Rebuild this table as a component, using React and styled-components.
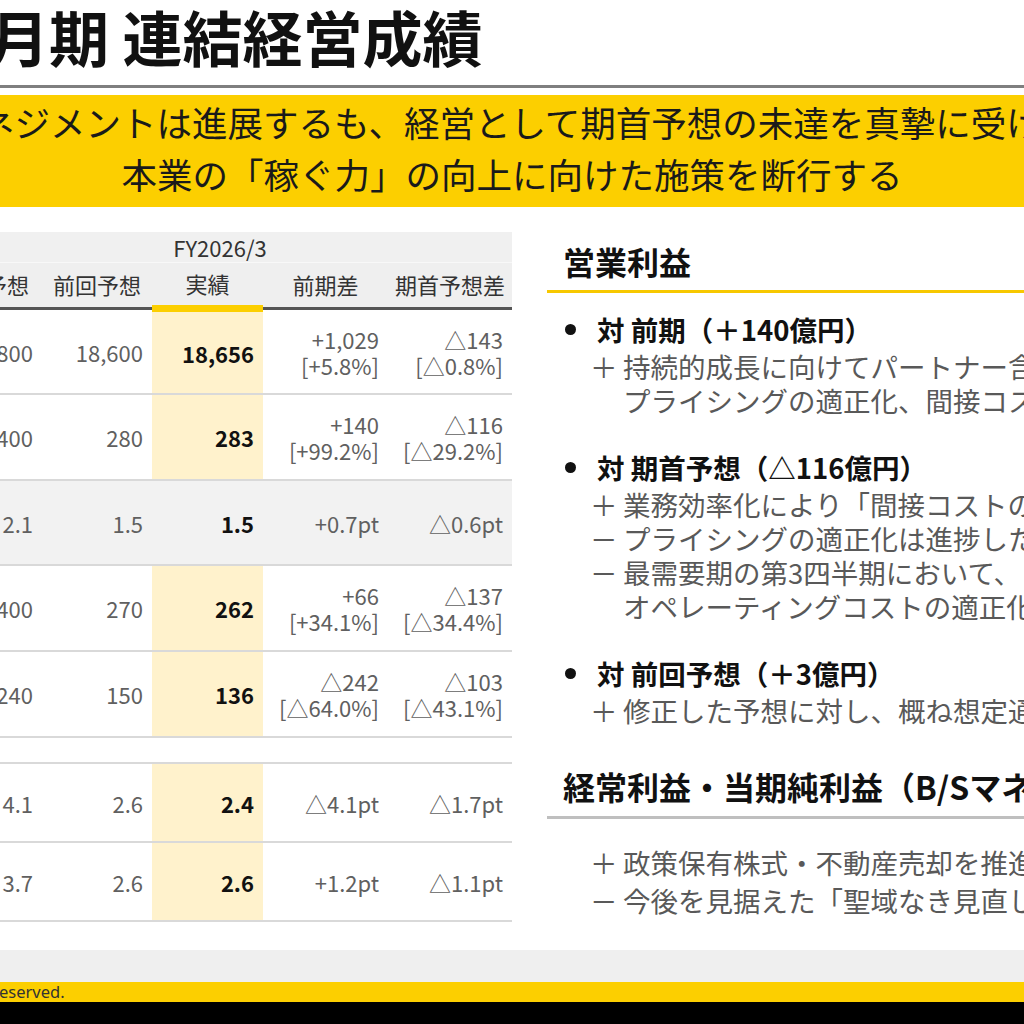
import React from "react";
import styled, { createGlobalStyle } from "styled-components";

const GlobalStyle = createGlobalStyle`
  html, body {
    margin: 0;
    padding: 0;
    background: #fff;
  }
  body {
    font-family: "Noto Sans CJK JP", "Noto Sans", sans-serif;
  }
`;

const Page = styled.div`
  width: 1024px;
  height: 1024px;
  overflow: hidden;
  display: flex;
  flex-direction: column;
  background: #fff;
  color: #222;
`;

const TitleBar = styled.header`
  height: 85px;
  flex-shrink: 0;
  display: flex;
  align-items: flex-start;
  padding-top: 6px;
  box-sizing: border-box;
`;

const Title = styled.h1`
  margin: 0 0 0 -11px;
  font-size: 60px;
  font-weight: 700;
  line-height: 60px;
  white-space: nowrap;
  color: #111;
`;

const TitleRule = styled.div`
  height: 3px;
  flex-shrink: 0;
  background: #7f7f7f;
  margin-bottom: 7px;
`;

const Banner = styled.section`
  height: 112px;
  flex-shrink: 0;
  box-sizing: border-box;
  padding-top: 1px;
  background: #fccf00;
  display: flex;
  flex-direction: column;
  align-items: center;
  font-size: 35.5px;
  line-height: 52px;
  color: #1a1a1a;
  white-space: nowrap;
`;

const BannerLine = styled.div`
  align-self: ${(p) => (p.$bleed ? "flex-start" : "center")};
  margin-left: ${(p) => (p.$bleed ? "-21px" : "0")};
`;

const Content = styled.main`
  flex: 1;
  display: flex;
  min-height: 0;
`;

const TableArea = styled.div`
  width: 512px;
  flex-shrink: 0;
  padding-top: 25px;
`;

const Table = styled.table`
  margin-left: -72px;
  width: 584px;
  table-layout: fixed;
  border-collapse: collapse;
  font-size: 22px;
  color: #595959;
`;

const PeriodCell = styled.th`
  height: 30px;
  padding: 0;
  background: #f0f0f0;
  font-weight: 400;
  line-height: 30px;
  text-align: center;
  color: #333;
  border-bottom: 1px solid #f8f8f8;
`;

const HeadCell = styled.th`
  height: 40px;
  padding: 0 0 2px;
  background: #efefef;
  font-weight: 400;
  text-align: center;
  color: #333;
  border-bottom: ${(p) => (p.$actual ? "7px solid #fccf00" : "3px solid #555")};
`;

const Cell = styled.td`
  height: ${(p) => p.$h}px;
  padding: 0 9px 0 0;
  text-align: right;
  vertical-align: middle;
  line-height: 26px;
  border-bottom: 2px solid #d9d9d9;
  background: ${(p) => (p.$gray ? "#f2f2f2" : p.$actual ? "#fff2cc" : "transparent")};
  color: ${(p) => (p.$actual ? "#111" : "#606060")};
  font-weight: ${(p) => (p.$actual ? 700 : 400)};
  white-space: nowrap;
`;

const SpacerCell = styled.td`
  height: 24px;
  padding: 0;
  border-bottom: 2px solid #d9d9d9;
`;

const RightPanel = styled.div`
  flex: 1;
  min-width: 0;
  margin-left: 35px;
  padding-top: 32px;
  white-space: nowrap;
`;

const SectionHead = styled.h2`
  margin: ${(p) => (p.$first ? "0" : "37px 0 0")};
  padding-left: 16px;
  font-size: 32px;
  line-height: 44px;
  font-weight: 700;
  color: #111;
`;

const HeadRule = styled.div`
  height: 3px;
  margin-top: ${(p) => (p.$yellow ? "7px" : "8px")};
  background: ${(p) => (p.$yellow ? "#f7c800" : "#bfbfbf")};
`;

const Items = styled.div`
  margin-top: ${(p) => p.$top}px;
`;

const Point = styled.div`
  display: flex;
  align-items: center;
  margin-top: ${(p) => (p.$first ? "0" : "32px")};
  margin-bottom: 2px;
  padding-left: 18px;
  font-size: 27.5px;
  line-height: 36px;
  font-weight: 700;
  color: #111;
`;

const Dot = styled.span`
  width: 11px;
  height: 11px;
  border-radius: 50%;
  background: #111;
  margin-right: 21px;
  flex-shrink: 0;
`;

const Note = styled.div`
  display: flex;
  padding-left: 43px;
  font-size: 27.5px;
  line-height: ${(p) => p.$lh || 34}px;
  color: #595959;
`;

const Mark = styled.span`
  width: 33px;
  flex-shrink: 0;
`;

const Band = styled.div`
  height: ${(p) => p.$h}px;
  flex-shrink: 0;
  background: ${(p) => p.$bg};
`;

const FooterBar = styled.footer`
  height: 20px;
  flex-shrink: 0;
  background: #fccf00;
  font-family: "Noto Sans", "Noto Sans CJK JP", sans-serif;
  font-size: 16.5px;
  line-height: 20px;
  color: #333;
  white-space: nowrap;
  margin-left: -1px;
`;

const rows = [
  { h: 81, v: ["18,800", "18,600", "18,656", ["+1,029", "[+5.8%]"], ["△143", "[△0.8%]"]] },
  { h: 84, v: ["400", "280", "283", ["+140", "[+99.2%]"], ["△116", "[△29.2%]"]] },
  { h: 83, gray: true, v: ["2.1", "1.5", "1.5", "+0.7pt", "△0.6pt"] },
  { h: 84, v: ["400", "270", "262", ["+66", "[+34.1%]"], ["△137", "[△34.4%]"]] },
  { h: 84, v: ["240", "150", "136", ["△242", "[△64.0%]"], ["△103", "[△43.1%]"]] },
  { spacer: true },
  { h: 77, v: ["4.1", "2.6", "2.4", "△4.1pt", "△1.7pt"] },
  { h: 77, v: ["3.7", "2.6", "2.6", "+1.2pt", "△1.1pt"] },
];

const renderValue = (val) =>
  Array.isArray(val) ? (
    <>
      {val[0]}
      <br />
      {val[1]}
    </>
  ) : (
    val
  );

const groups = [
  {
    title: "対 前期（＋140億円）",
    notes: [["＋", "持続的成長に向けてパートナー含"], ["", "プライシングの適正化、間接コス"]],
  },
  {
    title: "対 期首予想（△116億円）",
    notes: [
      ["＋", "業務効率化により「間接コストの"],
      ["－", "プライシングの適正化は進捗した"],
      ["－", "最需要期の第3四半期において、"],
      ["", "オペレーティングコストの適正化"],
    ],
  },
  {
    title: "対 前回予想（＋3億円）",
    notes: [["＋", "修正した予想に対し、概ね想定通"]],
  },
];

export default function App() {
  return (
    <Page>
      <GlobalStyle />
      <TitleBar>
        <Title>月期 連結経営成績</Title>
      </TitleBar>
      <TitleRule />
      <Banner>
        <BannerLine $bleed>ネジメントは進展するも、経営として期首予想の未達を真摯に受け</BannerLine>
        <BannerLine>本業の「稼ぐ力」の向上に向けた施策を断行する</BannerLine>
      </Banner>

      <Content>
        <TableArea>
          <Table>
            <colgroup>
              <col style={{ width: 114 }} />
              <col style={{ width: 110 }} />
              <col style={{ width: 111 }} />
              <col style={{ width: 125 }} />
              <col style={{ width: 124 }} />
            </colgroup>
            <thead>
              <tr>
                <PeriodCell colSpan={5}>FY2026/3</PeriodCell>
              </tr>
              <tr>
                <HeadCell>期首予想</HeadCell>
                <HeadCell>前回予想</HeadCell>
                <HeadCell $actual>実績</HeadCell>
                <HeadCell>前期差</HeadCell>
                <HeadCell>期首予想差</HeadCell>
              </tr>
            </thead>
            <tbody>
              {rows.map((row, i) =>
                row.spacer ? (
                  <tr key={i}>
                    <SpacerCell colSpan={5} />
                  </tr>
                ) : (
                  <tr key={i}>
                    {row.v.map((val, j) => (
                      <Cell key={j} $h={row.h} $gray={row.gray} $actual={j === 2}>
                        {renderValue(val)}
                      </Cell>
                    ))}
                  </tr>
                )
              )}
            </tbody>
          </Table>
        </TableArea>

        <RightPanel>
          <SectionHead $first>営業利益</SectionHead>
          <HeadRule $yellow />
          <Items $top={18}>
            {groups.map((g, i) => (
              <React.Fragment key={i}>
                <Point $first={i === 0}>
                  <Dot />
                  {g.title}
                </Point>
                {g.notes.map(([mark, text], j) => (
                  <Note key={j}>
                    <Mark>{mark}</Mark>
                    {text}
                  </Note>
                ))}
              </React.Fragment>
            ))}
          </Items>

          <SectionHead>経常利益・当期純利益（B/Sマネ</SectionHead>
          <HeadRule />
          <Items $top={24}>
            <Note $lh={38}>
              <Mark>＋</Mark>
              政策保有株式・不動産売却を推進
            </Note>
            <Note $lh={38}>
              <Mark>－</Mark>
              今後を見据えた「聖域なき見直し
            </Note>
          </Items>
        </RightPanel>
      </Content>

      <Band $h={32} $bg="#efefef" />
      <FooterBar>eserved.</FooterBar>
      <Band $h={22} $bg="#000" />
    </Page>
  );
}
